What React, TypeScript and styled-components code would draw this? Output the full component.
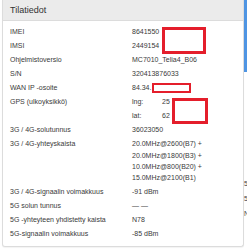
import React from "react";
import styled, { createGlobalStyle } from "styled-components";

const Global = createGlobalStyle`
  html, body {
    margin: 0;
    padding: 0;
    background: #ffffff;
    overflow: hidden;
  }
  body {
    font-family: "Liberation Sans", Arial, sans-serif;
    color: #333333;
  }
`;

const Page = styled.div`
  display: flex;
  align-items: flex-start;
  width: 247px;
  height: 250px;
  overflow: hidden;
`;

const Panel = styled.section`
  position: relative;
  flex: 0 0 242px;
  margin-left: 2px;
  box-sizing: border-box;
  border: 1px solid #dcdcdc;
  border-top: 0;
  border-radius: 0 0 3px 3px;
  box-shadow: 0 1px 1px rgba(0, 0, 0, 0.05);
  background: #ffffff;
`;

const Heading = styled.header`
  height: 21px;
  box-sizing: border-box;
  padding: 0 7px;
  display: flex;
  align-items: center;
  background: #ebebeb;
  border-bottom: 1px solid #dcdcdc;
  font-size: 9px;
  color: #333333;
`;

const Body = styled.div`
  padding: 4px 0 5px;
  font-size: 7px;
  color: #3a3a3a;
`;

const Row = styled.div`
  display: grid;
  grid-template-columns: 129px 1fr;
`;

const Label = styled.div`
  padding: 1.35px 0 1.35px 7px;
  line-height: 11.3px;
`;

const Value = styled.div<{ $flush?: boolean }>`
  padding: ${(p) => (p.$flush ? "0" : "1.35px 0")};
  line-height: 11.3px;
`;

const Line = styled.div``;

const SubRow = styled.div`
  display: grid;
  grid-template-columns: 30px 1fr;
  height: 14px;
  align-items: center;
`;

const Redaction = styled.div<{ $x: number; $y: number; $w: number; $h: number; $b: number }>`
  position: absolute;
  left: ${(p) => p.$x}px;
  top: ${(p) => p.$y}px;
  width: ${(p) => p.$w}px;
  height: ${(p) => p.$h}px;
  box-sizing: border-box;
  border: ${(p) => p.$b}px solid #e41e2b;
  background: #ffffff;
`;

const Neighbor = styled.aside`
  flex: 0 0 3px;
  margin-left: 0px;
  display: flex;
  flex-direction: column;
  overflow: hidden;
`;

const BlueStrip = styled.div`
  height: 72px;
  background: #4f95e3;
`;

const Spacer = styled.div<{ $h: number }>`
  height: ${(p) => p.$h}px;
`;

const NeighborText = styled.div`
  font-size: 7px;
  line-height: 15px;
  color: #444;
  white-space: nowrap;
`;

type Item = { label: string; value: React.ReactNode; flush?: boolean };

const items: Item[] = [
  { label: "IMEI", value: "8641550" },
  { label: "IMSI", value: "2449154" },
  { label: "Ohjelmistoversio", value: "MC7010_Telia4_B06" },
  { label: "S/N", value: "320413876033" },
  { label: "WAN IP -osoite", value: "84.34." },
  {
    label: "GPS (ulkoyksikkö)",
    flush: true,
    value: (
      <>
        <SubRow>
          <span>lng:</span>
          <span>25</span>
        </SubRow>
        <SubRow>
          <span>lat:</span>
          <span>62</span>
        </SubRow>
      </>
    ),
  },
  { label: "3G / 4G-solutunnus", value: "36023050" },
  {
    label: "3G / 4G-yhteyskaista",
    value: (
      <>
        <Line>20.0MHz@2600(B7) +</Line>
        <Line>20.0MHz@1800(B3) +</Line>
        <Line>10.0MHz@800(B20) +</Line>
        <Line>15.0MHz@2100(B1)</Line>
      </>
    ),
  },
  { label: "3G / 4G-signaalin voimakkuus", value: "-91 dBm" },
  { label: "5G solun tunnus", value: "— —" },
  { label: "5G -yhteyteen yhdistetty kaista", value: "N78" },
  { label: "5G-signaalin voimakkuus", value: "-85 dBm" },
];

export default function App() {
  return (
    <>
      <Global />
      <Page>
        <Panel>
          <Heading>Tilatiedot</Heading>
          <Body>
            {items.map((it) => (
              <Row key={it.label}>
                <Label>{it.label}</Label>
                <Value $flush={it.flush}>{it.value}</Value>
              </Row>
            ))}
          </Body>
          <Redaction $x={159} $y={27} $w={44} $h={27} $b={3} />
          <Redaction $x={149} $y={83} $w={39} $h={10} $b={2.5} />
          <Redaction $x={169} $y={98} $w={36} $h={26} $b={3} />
        </Panel>
        <Neighbor>
          <BlueStrip />
          <Spacer $h={104} />
          <NeighborText>5G</NeighborText>
          <NeighborText>5G</NeighborText>
          <NeighborText>N7</NeighborText>
        </Neighbor>
      </Page>
    </>
  );
}
